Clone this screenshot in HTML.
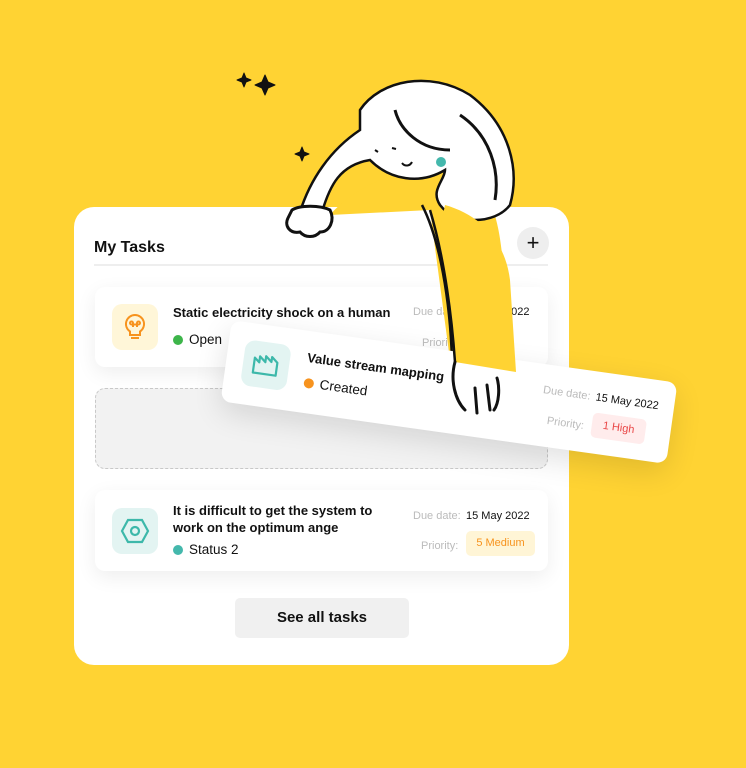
<!DOCTYPE html>
<html><head><style>
*{margin:0;padding:0;box-sizing:border-box}
body{width:746px;height:768px;background:#FFD333;font-family:"Liberation Sans",sans-serif;position:relative;overflow:hidden;color:#111}
.abs{position:absolute}
.main{left:74px;top:207px;width:495px;height:458px;background:#fff;border-radius:20px}
.task{background:#fff;border-radius:10px;box-shadow:0 6px 20px rgba(0,0,0,.07)}
.ic{width:46px;height:46px;border-radius:10px;display:flex;align-items:center;justify-content:center}
.t{font-weight:bold;font-size:13px;line-height:17px}
.st{font-size:13.5px;display:flex;align-items:center;gap:6px}
.dot{width:10px;height:10px;border-radius:50%}
.lbl{font-size:11px;color:#bbb}
.val{font-size:11px;color:#111}
</style></head><body>
<div class="abs main"></div>
<div class="abs" style="left:94px;top:239px;font-weight:bold;font-size:16px">My Tasks</div>
<div class="abs" style="left:94px;top:264px;width:454px;height:2px;background:#eee"></div>
<div class="abs" style="left:517px;top:227px;width:32px;height:32px;border-radius:50%;background:#eee;font-size:22px;text-align:center;line-height:31px">+</div>

<div class="abs task" style="left:95px;top:287px;width:453px;height:80px">
 <div class="abs ic" style="left:17px;top:17px;background:#FFF6D8">
  <svg width="26" height="28" viewBox="0 0 26 28" fill="none" stroke="#F7931E" stroke-width="2"><path d="M13 2a9 9 0 0 0-5 16.5V22h10v-3.5A9 9 0 0 0 13 2z"/><path d="M9 25h8M11 14v-4a1.5 1.5 0 1 0-1.5 1.5H16.5A1.5 1.5 0 1 0 15 10v4"/></svg>
 </div>
 <div class="abs t" style="left:78px;top:17px">Static electricity shock on a human</div>
 <div class="abs st" style="left:78px;top:45px"><span class="dot" style="background:#3DB54A"></span>Open</div>
 <div class="abs lbl" style="left:318px;top:19px">Due date:</div>
 <div class="abs val" style="left:410px;top:19px">2022</div>
 <div class="abs lbl" style="left:327px;top:50px">Priority:</div>
</div>

<div class="abs" style="left:95px;top:388px;width:453px;height:81px;border:1.5px dashed #c8c8c8;background:#f2f2f2;border-radius:10px"></div>

<div class="abs task" style="left:95px;top:490px;width:453px;height:81px">
 <div class="abs ic" style="left:17px;top:18px;background:#E3F4F2">
  <svg width="30" height="28" viewBox="0 0 30 28" fill="none" stroke="#3DB8AA" stroke-width="2.2"><path d="M8 3h14l6 11-6 11H8L2 14z"/><circle cx="15" cy="14" r="4"/></svg>
 </div>
 <div class="abs t" style="left:78px;top:12px">It is difficult to get the system to<br>work on the optimum ange</div>
 <div class="abs st" style="left:78px;top:52px"><span class="dot" style="background:#44B8AC"></span>Status 2</div>
 <div class="abs lbl" style="left:318px;top:20px">Due date:</div>
 <div class="abs val" style="left:371px;top:20px">15 May 2022</div>
 <div class="abs lbl" style="left:326px;top:50px">Priority:</div>
 <div class="abs" style="left:371px;top:41px;width:69px;height:25px;background:#FFF5D6;border-radius:5px;color:#F7931E;font-size:11px;text-align:center;line-height:25px">5 Medium</div>
</div>

<div class="abs" style="left:235px;top:598px;width:174px;height:40px;background:#f0f0f0;border-radius:5px;text-align:center;line-height:40px;font-size:15px;font-weight:bold">See all tasks</div>

<!-- girl -->
<svg class="abs" style="left:0;top:0" width="746" height="768" viewBox="0 0 746 768">
 <g fill="none" stroke="#111" stroke-width="2.5" stroke-linecap="round" stroke-linejoin="round">
  <path d="M244 73l2 5 5 2-5 2-2 5-2-5-5-2 5-2z M265 75l3 7 7 3-7 3-3 7-3-7-7-3 7-3z M302 147l2 5 5 2-5 2-2 5-2-5-5-2 5-2z" fill="#111" stroke-width="1"/>
 </g>
 <!-- yellow body -->
 <path d="M330 215 C360 180,420 160,460 172 C500 190,500 240,505 280 L515 372 L450 360 L430 210 Z" fill="#FFD333"/>
 <!-- hair/head white -->
 <path d="M360 110 C380 80,430 70,470 95 C510 125,520 170,510 205 C495 225,455 225,440 205 C430 190,445 180,445 170 C420 185,390 180,370 160 C340 165,330 185,322 212 L300 212 C310 180,330 150,360 130 Z" fill="#fff" stroke="#111" stroke-width="2.5"/>
 <path d="M395 110 C400 130,420 150,450 150" fill="none" stroke="#111" stroke-width="3"/>
 <path d="M460 115 C490 135,500 170,495 200" fill="none" stroke="#111" stroke-width="3"/>
 <path d="M422 205 C440 240,450 300,452 360" fill="none" stroke="#111" stroke-width="2.5"/>
 <circle cx="441" cy="162" r="5" fill="#44B8AC"/>
 <path d="M375 150l3 2M392 148l4 1M402 163c3 4 8 3 10-1" fill="none" stroke="#111" stroke-width="2"/>
 <!-- hand left -->
 <path d="M292 210 C300 205,320 205,330 210 C335 220,330 232,320 232 C315 238,305 238,300 232 C290 234,284 226,288 218 Z" fill="#fff" stroke="#111" stroke-width="3"/>
 <!-- hand right -->
 <path d="M452 360 C448 380,455 405,465 412 C475 415,485 410,495 405 C500 395,502 380,500 372" fill="#fff" stroke="#111" stroke-width="3"/>
</svg>

<!-- rotated card -->
<div class="abs task" style="left:224px;top:351px;width:450px;height:82px;transform:rotate(8deg);box-shadow:0 10px 30px rgba(0,0,0,.12);z-index:2">
 <div class="abs ic" style="left:17px;top:17px;background:#E3F4F2">
  <svg width="28" height="24" viewBox="0 0 28 24" fill="none" stroke="#3DB8AA" stroke-width="2.2" stroke-linejoin="round"><path d="M2 21V6l5 4V4l6 5V3l6 5V3l6 5v13z"/></svg>
 </div>
 <div class="abs t" style="left:80px;top:18px">Value stream mapping</div>
 <div class="abs st" style="left:80px;top:44px"><span class="dot" style="background:#F7931E"></span>Created</div>
 <div class="abs lbl" style="left:318px;top:20px">Due date:</div>
 <div class="abs val" style="left:371px;top:20px">15 May 2022</div>
 <div class="abs lbl" style="left:326px;top:50px">Priority:</div>
 <div class="abs" style="left:371px;top:41px;width:54px;height:25px;background:#FFECEC;border-radius:5px;color:#E94545;font-size:11px;text-align:center;line-height:25px">1 High</div>
</div>
<!-- arm over card -->
<svg class="abs" style="left:0;top:0;z-index:3" width="746" height="768" viewBox="0 0 746 768">
 <path d="M445 205 C480 215,505 240,510 280 L516 372 L455 362 C452 320,448 270,440 230 Z" fill="#FFD333"/>
 <path d="M455 362 C450 380,455 400,465 410 M475 388l2 25 M487 385l3 25 M497 378c3 10 2 25-3 32" fill="none" stroke="#111" stroke-width="3" stroke-linecap="round"/>
 <path d="M430 210 C445 260,452 320,455 362" fill="none" stroke="#111" stroke-width="2.5"/>
</svg>
</body></html>
